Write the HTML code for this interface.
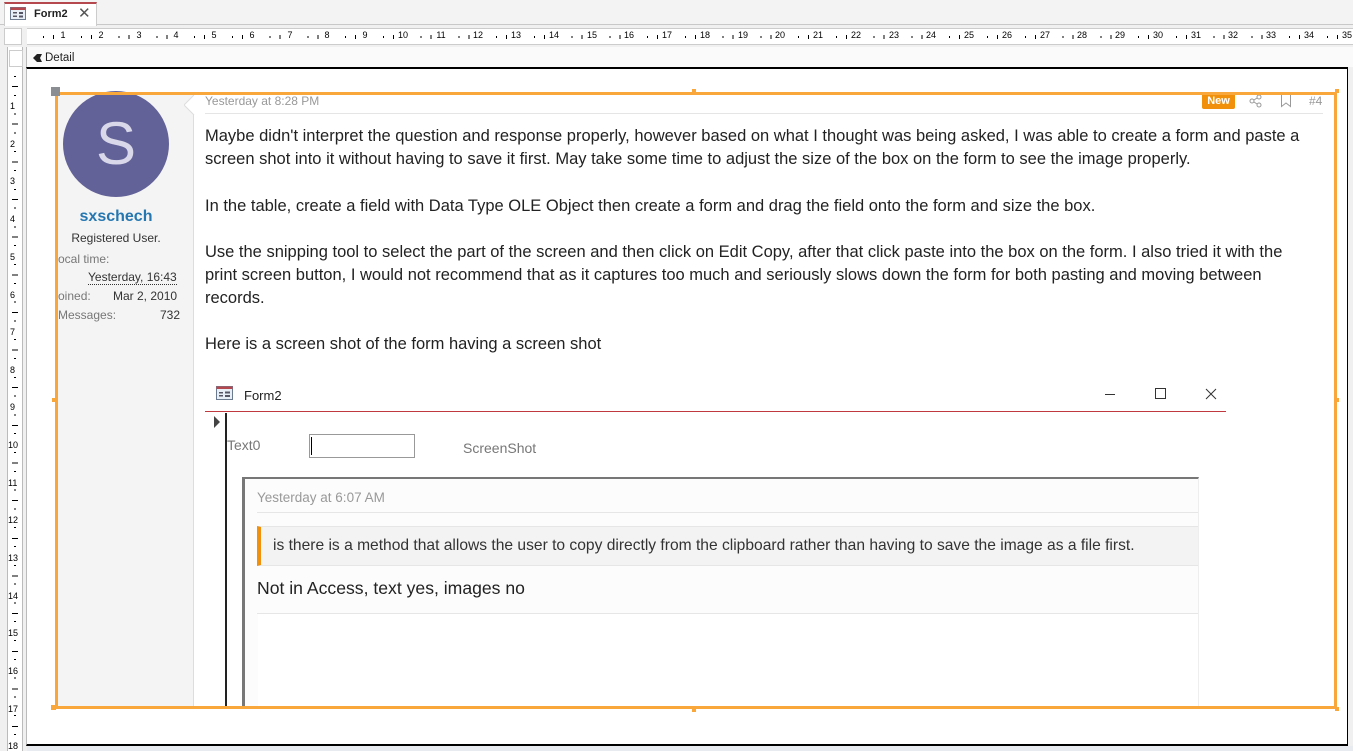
<!DOCTYPE html>
<html><head><meta charset="utf-8"><style>
*{margin:0;padding:0;box-sizing:border-box}
body{width:1353px;height:751px;overflow:hidden;background:#f0f0f0;font-family:"Liberation Sans",sans-serif;position:relative}
.a{position:absolute}
.hr span{position:absolute;top:30px;font-size:9px;color:#000;background:#fff;padding:0 1px;transform:translateX(-50%)}
.vr span{position:absolute;left:10px;font-size:9px;color:#000;background:#fff;transform:translateY(-50%)}
.body p{position:absolute;left:205px;font-size:16.5px;color:#222;white-space:nowrap;font-family:"Liberation Sans",sans-serif}
</style></head><body>
<!-- tab strip -->
<div class="a" style="left:0;top:0;width:1353px;height:25px;background:#f3f3f3;border-bottom:1px solid #c8c8c8"></div>
<div class="a" style="left:4px;top:2px;width:93px;height:24px;background:#fff;border-top:2px solid #b5484f;border-left:1px solid #ccc;border-right:1px solid #ccc"></div>
<svg class="a" style="left:10px;top:7px" width="16" height="13"><rect x="0.5" y="0.5" width="15" height="12" fill="#e8eef6" stroke="#6b7a8e"/><rect x="0.5" y="0.5" width="15" height="2.5" fill="#b5484f"/><rect x="3" y="5" width="4" height="1.5" fill="#556"/><rect x="9" y="5" width="4" height="2" fill="#556"/><rect x="3" y="8.5" width="4" height="1.5" fill="#556"/><rect x="9" y="8.5" width="4" height="2" fill="#556"/></svg>
<div class="a" style="left:34px;top:8px;font-size:11px;font-weight:bold;color:#222">Form2</div>
<div class="a" style="left:78px;top:4px;font-size:15px;color:#555">✕</div>
<!-- ruler -->
<div class="a" style="left:4px;top:28px;width:18px;height:17px;background:#fff;border:1px solid #ccc"></div>
<div class="a hr" style="left:27px;top:28px;width:1326px;height:17px;background:#fff;border-top:1px solid #ccc;border-bottom:1px solid #ccc"></div>
<div class="a" style="left:27px;top:36px;width:1326px;height:2px;background:repeating-linear-gradient(90deg,transparent 0,transparent 16px,#000 16px,#000 17px,transparent 17px,transparent 18.88px)"></div>
<div class="a" style="left:27px;top:35px;width:1326px;height:4px;background:repeating-linear-gradient(90deg,transparent 0,transparent 26px,#000 26px,#000 27px,transparent 27px,transparent 37.76px)"></div>
<div class="hr">
<span style="left:63px">1</span><span style="left:101px">2</span><span style="left:139px">3</span><span style="left:176px">4</span><span style="left:214px">5</span><span style="left:252px">6</span><span style="left:290px">7</span><span style="left:327px">8</span><span style="left:365px">9</span><span style="left:403px">10</span><span style="left:441px">11</span><span style="left:478px">12</span><span style="left:516px">13</span><span style="left:554px">14</span><span style="left:592px">15</span><span style="left:629px">16</span><span style="left:667px">17</span><span style="left:705px">18</span><span style="left:743px">19</span><span style="left:780px">20</span><span style="left:818px">21</span><span style="left:856px">22</span><span style="left:894px">23</span><span style="left:931px">24</span><span style="left:969px">25</span><span style="left:1007px">26</span><span style="left:1045px">27</span><span style="left:1082px">28</span><span style="left:1120px">29</span><span style="left:1158px">30</span><span style="left:1196px">31</span><span style="left:1233px">32</span><span style="left:1271px">33</span><span style="left:1309px">34</span><span style="left:1347px">35</span>
</div>
<!-- vertical ruler -->
<div class="a" style="left:7px;top:47px;width:16px;height:704px;background:#fff;border-left:1px solid #bbb;border-right:1px solid #bbb"></div>
<div class="a" style="left:9px;top:50px;width:14px;height:17px;border:1px solid #ccc;background:#fff"></div>
<div class="a" style="left:14px;top:68px;width:2px;height:683px;background:repeating-linear-gradient(180deg,transparent 0,transparent 8px,#000 8px,#000 9px,transparent 9px,transparent 18.8px)"></div>
<div class="a" style="left:12px;top:68px;width:6px;height:683px;background:repeating-linear-gradient(180deg,transparent 0,transparent 18px,#000 18px,#000 19px,transparent 19px,transparent 37.65px)"></div>
<div class="vr">
<span style="top:106px">1</span><span style="top:144px">2</span><span style="top:181px">3</span><span style="top:219px">4</span><span style="top:257px">5</span><span style="top:295px">6</span><span style="top:332px">7</span><span style="top:370px">8</span><span style="top:407px">9</span><span style="top:445px;left:8px">10</span><span style="top:483px;left:8px">11</span><span style="top:520px;left:8px">12</span><span style="top:558px;left:8px">13</span><span style="top:596px;left:8px">14</span><span style="top:633px;left:8px">15</span><span style="top:671px;left:8px">16</span><span style="top:709px;left:8px">17</span><span style="top:746px;left:8px">18</span>
</div>
<!-- detail bar -->
<div class="a" style="left:26px;top:47px;width:1327px;height:20px;background:#fafafa;border-left:1px solid #bbb"></div>
<svg class="a" style="left:32px;top:53px" width="11" height="10"><path d="M1 5 L5 1 L10 1 L8 5 L10 9 L5 9 Z" fill="#222"/></svg>
<div class="a" style="left:45px;top:52px;font-size:11.5px;color:#222">Detail</div>
<!-- content area -->
<div class="a" style="left:26px;top:67px;width:1322px;height:679px;background:#fff;border-top:2px solid #000;border-right:1px solid #000;border-bottom:2px solid #000;border-left:1px solid #bbb"></div>
<div class="a" style="left:27px;top:746px;width:1326px;height:5px;background:#e8ecf0"></div>
<!-- left user panel -->
<div class="a" style="left:58px;top:95px;width:136px;height:611px;background:#f4f4f4;border-right:1px solid #ddd"></div>
<svg class="a" style="left:184px;top:95px" width="20" height="30"><path d="M10 0 L0 10 L10 20" fill="#fff" stroke="#ddd"/></svg>
<div class="a" style="left:63px;top:91px;width:106px;height:106px;border-radius:50%;background:#636298;color:#d8d8ea;font-size:60px;text-align:center;line-height:106px">S</div>
<div class="a" style="left:58px;top:208px;width:116px;text-align:center;font-size:16px;font-weight:bold;color:#2577b1">sxschech</div>
<div class="a" style="left:58px;top:231px;width:116px;text-align:center;font-size:12px;color:#333">Registered User.</div>
<div class="a" style="left:58px;top:252px;font-size:12px;color:#777">ocal time:</div>
<div class="a" style="left:88px;top:271px;font-size:12px;color:#333;border-bottom:1px dotted #333;line-height:13px">Yesterday, 16:43</div>
<div class="a" style="left:58px;top:289px;font-size:12px;color:#777">oined:</div>
<div class="a" style="left:113px;top:289px;font-size:12px;color:#333">Mar 2, 2010</div>
<div class="a" style="left:58px;top:308px;font-size:12px;color:#777">Messages:</div>
<div class="a" style="left:160px;top:308px;font-size:12px;color:#333">732</div>
<!-- post header -->
<div class="a" style="left:205px;top:94px;font-size:12px;color:#999">Yesterday at 8:28 PM</div>
<div class="a" style="left:205px;top:113px;width:1118px;height:1px;background:#e5e5e5"></div>
<div class="a" style="left:1202px;top:93px;width:33px;height:16px;background:#f0900b;color:#fff;font-size:11px;font-weight:bold;text-align:center;line-height:16px;border-radius:2px">New</div>
<svg class="a" style="left:1249px;top:94px" width="14" height="14" fill="none" stroke="#999" stroke-width="1"><circle cx="10" cy="3" r="2"/><circle cx="3" cy="7" r="2"/><circle cx="10" cy="11" r="2"/><path d="M5 6 L8 4 M5 8 L8 10"/></svg>
<svg class="a" style="left:1280px;top:94px" width="12" height="14" fill="none" stroke="#999"><path d="M1.5 1 V12.5 L6 9 L10.5 12.5 V1"/></svg>
<div class="a" style="left:1309px;top:94px;font-size:12px;color:#999">#4</div>
<div class="body">
<p style="top:127px">Maybe didn't interpret the question and response properly, however based on what I thought was being asked, I was able to create a form and paste a</p>
<p style="top:150px">screen shot into it without having to save it first. May take some time to adjust the size of the box on the form to see the image properly.</p>
<p style="top:197px">In the table, create a field with Data Type OLE Object then create a form and drag the field onto the form and size the box.</p>
<p style="top:243px">Use the snipping tool to select the part of the screen and then click on Edit Copy, after that click paste into the box on the form. I also tried it with the</p>
<p style="top:266px">print screen button, I would not recommend that as it captures too much and seriously slows down the form for both pasting and moving between</p>
<p style="top:289px">records.</p>
<p style="top:335px">Here is a screen shot of the form having a screen shot</p>
</div>
<!-- embedded screenshot -->
<div class="a" style="left:205px;top:378px;width:1021px;height:34px;background:#fff;border-bottom:1px solid #c0393f"></div>
<svg class="a" style="left:216px;top:386px" width="17" height="14"><rect x="0.5" y="0.5" width="16" height="13" fill="#e8eef6" stroke="#6b7a8e"/><rect x="0.5" y="0.5" width="16" height="2.5" fill="#b5484f"/><rect x="3" y="6" width="4" height="1.5" fill="#556"/><rect x="9" y="5.5" width="5" height="2" fill="#556"/><rect x="3" y="9" width="4" height="1.5" fill="#556"/><rect x="9" y="9" width="5" height="2" fill="#556"/></svg>
<div class="a" style="left:244px;top:388px;font-size:13px;color:#222">Form2</div>
<div class="a" style="left:1105px;top:394px;width:10px;height:1px;background:#333"></div>
<div class="a" style="left:1155px;top:388px;width:11px;height:11px;border:1px solid #333"></div>
<svg class="a" style="left:1205px;top:388px" width="12" height="12" stroke="#333"><path d="M1 1 L11 11 M11 1 L1 11"/></svg>
<svg class="a" style="left:213px;top:416px" width="8" height="12"><path d="M1 0 L7 6 L1 12 Z" fill="#444"/></svg>
<div class="a" style="left:225px;top:413px;width:2px;height:293px;background:#222"></div>
<div class="a" style="left:227px;top:437px;font-size:14px;color:#777">Text0</div>
<div class="a" style="left:309px;top:434px;width:106px;height:24px;border:1px solid #999;background:#fff"></div>
<div class="a" style="left:311px;top:437px;width:1px;height:18px;background:#000"></div>
<div class="a" style="left:463px;top:440px;font-size:14px;color:#777">ScreenShot</div>
<div class="a" style="left:242px;top:477px;width:957px;height:229px;border-top:2px solid #777;border-left:3px solid #777;border-right:1px solid #eee;background:#fcfcfc"></div>
<div class="a" style="left:257px;top:490px;font-size:13.5px;color:#999">Yesterday at 6:07 AM</div>
<div class="a" style="left:257px;top:512px;width:941px;height:1px;background:#e6e6e6"></div>
<div class="a" style="left:257px;top:526px;width:941px;height:40px;background:#f3f3f3;border-top:1px solid #e6e6e6;border-bottom:1px solid #e6e6e6;border-left:4px solid #f0900b"></div>
<div class="a" style="left:273px;top:537px;font-size:15.6px;color:#333;white-space:nowrap">is there is a method that allows the user to copy directly from the clipboard rather than having to save the image as a file first.</div>
<div class="a" style="left:257px;top:578px;font-size:17.6px;color:#222">Not in Access, text yes, images no</div>
<div class="a" style="left:257px;top:613px;width:941px;height:1px;background:#e6e6e6"></div>
<div class="a" style="left:258px;top:614px;width:940px;height:92px;background:#fff"></div>
<!-- selection -->
<div class="a" style="left:55px;top:92px;width:1282px;height:617px;border:3px solid #f9a63a"></div>
<div class="a" style="left:51px;top:87px;width:9px;height:9px;background:#8a8d92"></div>
<div class="a" style="left:51px;top:705px;width:5px;height:5px;background:#f9a63a"></div>
<div class="a" style="left:692px;top:89px;width:4px;height:4px;background:#f9a63a"></div>
<div class="a" style="left:692px;top:708px;width:4px;height:4px;background:#f9a63a"></div>
<div class="a" style="left:52px;top:398px;width:4px;height:4px;background:#f9a63a"></div>
<div class="a" style="left:1335px;top:398px;width:4px;height:4px;background:#f9a63a"></div>
<div class="a" style="left:1335px;top:89px;width:4px;height:4px;background:#f9a63a"></div>
<div class="a" style="left:1335px;top:707px;width:4px;height:4px;background:#f9a63a"></div>
</body></html>
